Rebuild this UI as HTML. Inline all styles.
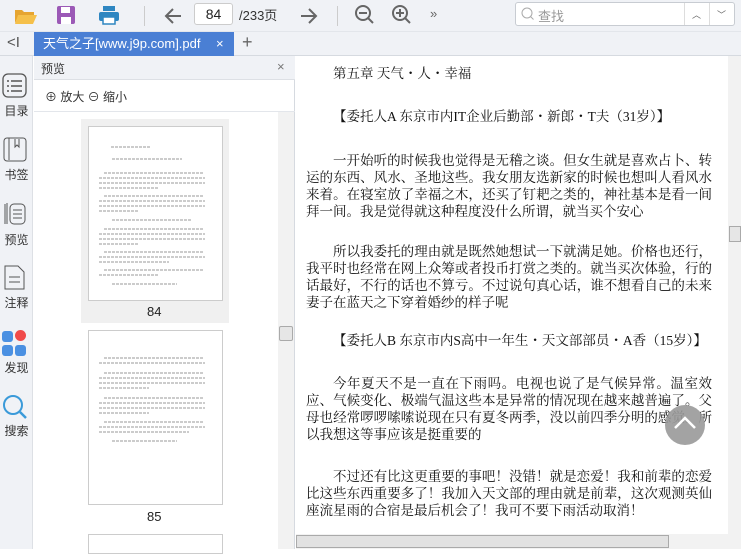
<!DOCTYPE html>
<html><head><meta charset="utf-8"><style>
*{margin:0;padding:0;box-sizing:border-box}
body{width:741px;height:549px;overflow:hidden;background:#fff;font-family:"Liberation Sans","Noto Sans CJK SC",sans-serif;position:relative}
.a{position:absolute}
#tb{left:0;top:0;width:741px;height:32px;background:#f0f2f6;border-bottom:1px solid #e3e6eb}
#tabs{left:0;top:32px;width:741px;height:24px;background:#f0f2f6;border-bottom:1px solid #d6dae0}
#tab{left:34px;top:32px;width:200px;height:24px;background:#4a7fd4;color:#fff;font-size:13px;line-height:24px;padding-left:9px}
#side{left:0;top:56px;width:33px;height:493px;background:#f0f2f6;border-right:1px solid #dde0e5}
.sl{position:absolute;left:0;width:33px;text-align:center;font-size:12px;color:#333}
#pv{left:34px;top:56px;width:261px;height:493px;background:#fff;border-right:1px solid #d6dae0}
#main{left:296px;top:56px;width:432px;height:493px;background:#fff}
.t{position:absolute;left:306px;width:406px;font-family:"Liberation Serif","Noto Serif CJK SC",serif;font-size:13.5px;line-height:17px;color:#111;text-align:justify;text-align-last:justify;white-space:nowrap}
.t div{text-align-last:justify;width:406px}
.thumb{position:absolute;background:#fff;border:1px solid #ccc}
.bl{position:absolute;height:2px;background:repeating-linear-gradient(90deg,#aaa 0 3px,#fff 3px 4px);opacity:.6}
</style></head><body>
<div id="tb" class="a">
<svg class="a" style="left:14px;top:6px" width="24" height="20"><path d="M1 4h7l2 2h10v3H5L1 17z" fill="#e6a531"/><path d="M4 9h19l-4 9H1z" fill="#f5c04a"/></svg>
<svg class="a" style="left:56px;top:5px" width="20" height="20"><rect x="1" y="1" width="18" height="18" rx="2" fill="#9b59b6"/><rect x="5" y="2" width="9" height="6" fill="#fff"/><rect x="5" y="12" width="10" height="7" fill="#fff"/></svg>
<svg class="a" style="left:98px;top:5px" width="22" height="20"><rect x="5" y="1" width="12" height="5" fill="#2e86c1"/><rect x="1" y="7" width="20" height="9" rx="2" fill="#2e86c1"/><rect x="5" y="12" width="12" height="7" fill="#fff" stroke="#2e86c1" stroke-width="1.5"/></svg>
<div class="a" style="left:144px;top:6px;width:1px;height:20px;background:#ccc"></div>
<svg class="a" style="left:163px;top:6px" width="20" height="20"><path d="M18 10H3M10 3l-7 7 7 7" stroke="#666" stroke-width="2" fill="none"/></svg>
<div class="a" style="left:194px;top:3px;width:39px;height:22px;background:#fff;border:1px solid #ccc;border-radius:3px;font-size:14px;text-align:center;line-height:20px;color:#222">84</div>
<div class="a" style="left:239px;top:5px;font-size:13px;color:#333">/233页</div>
<svg class="a" style="left:299px;top:6px" width="20" height="20"><path d="M2 10h15M10 3l7 7-7 7" stroke="#666" stroke-width="2" fill="none"/></svg>
<div class="a" style="left:337px;top:6px;width:1px;height:20px;background:#ccc"></div>
<svg class="a" style="left:354px;top:4px" width="22" height="22"><circle cx="9" cy="9" r="7" stroke="#666" stroke-width="2" fill="none"/><path d="M5 9h8M14 14l5 5" stroke="#666" stroke-width="2"/></svg>
<svg class="a" style="left:391px;top:4px" width="22" height="22"><circle cx="9" cy="9" r="7" stroke="#666" stroke-width="2" fill="none"/><path d="M5 9h8M9 5v8M14 14l5 5" stroke="#666" stroke-width="2"/></svg>
<div class="a" style="left:430px;top:6px;font-size:13px;color:#666">»</div>
<div class="a" style="left:515px;top:2px;width:220px;height:24px;background:#fff;border:1px solid #c8ccd2;border-radius:3px"></div>
<svg class="a" style="left:521px;top:7px" width="14" height="14"><circle cx="6" cy="6" r="5" stroke="#aaa" fill="none"/><path d="M9.5 9.5l3 3" stroke="#aaa"/></svg>
<div class="a" style="left:538px;top:6px;font-size:13px;color:#999">查找</div>
<div class="a" style="left:684px;top:3px;width:1px;height:22px;background:#ddd"></div>
<div class="a" style="left:709px;top:3px;width:1px;height:22px;background:#ddd"></div>
<div class="a" style="left:692px;top:8px;font-size:9px;color:#666">︿</div>
<div class="a" style="left:717px;top:8px;font-size:9px;color:#666">﹀</div>
</div>
<div id="tabs" class="a"><div class="a" style="left:7px;top:2px;font-size:15px;color:#555">&lt;I</div><div class="a" style="left:242px;top:0px;font-size:18px;color:#666">+</div></div>
<div id="tab" class="a">天气之子[www.j9p.com].pdf<span style="position:absolute;left:182px;color:#fff">×</span></div>
<div id="side" class="a">
<svg class="a" style="left:2px;top:17px" width="25" height="25"><rect x="1" y="1" width="23" height="23" rx="5" stroke="#555" stroke-width="1.3" fill="none"/><path d="M5 8h2M9 8h11M5 13h2M9 13h11M5 18h2M9 18h11" stroke="#555" stroke-width="1.5"/></svg>
<div class="sl" style="top:46px">目录</div>
<svg class="a" style="left:3px;top:81px" width="24" height="25"><rect x="1" y="1" width="22" height="23" rx="3" stroke="#555" fill="none"/><path d="M6 1v22M12 2v8l2-2 2 2V2" stroke="#555" fill="none"/></svg>
<div class="sl" style="top:110px">书签</div>
<svg class="a" style="left:3px;top:145px" width="24" height="26"><path d="M2 3v20M4 2v21" stroke="#555"/><rect x="7" y="3" width="15" height="20" rx="4" stroke="#555" fill="none"/><path d="M10 9h9M10 13h9M10 17h9" stroke="#555"/></svg>
<div class="sl" style="top:175px">预览</div>
<svg class="a" style="left:3px;top:208px" width="24" height="28"><path d="M2 2h13l6 6v17H2z" stroke="#555" fill="none"/><path d="M6 13h11M6 18h11" stroke="#555"/></svg>
<div class="sl" style="top:238px">注释</div>
<div class="a" style="left:2px;top:275px;width:11px;height:11px;background:#4a90e2;border-radius:3px"></div>
<div class="a" style="left:15px;top:274px;width:11px;height:11px;background:#f04a4a;border-radius:50%"></div>
<div class="a" style="left:2px;top:289px;width:11px;height:11px;background:#4a90e2;border-radius:3px"></div>
<div class="a" style="left:15px;top:289px;width:11px;height:11px;background:#4a90e2;border-radius:3px"></div>
<div class="sl" style="top:303px">发现</div>
<svg class="a" style="left:2px;top:338px" width="26" height="26"><circle cx="11" cy="11" r="9" stroke="#3a9ad9" stroke-width="2" fill="none"/><path d="M18 18l6 6" stroke="#3a9ad9" stroke-width="2.5"/></svg>
<div class="sl" style="top:366px">搜索</div>
</div>
<div id="pv" class="a">
<div class="a" style="left:0;top:0;width:261px;height:24px;background:#f0f2f6;border-bottom:1px solid #dde0e5"></div>
<div class="a" style="left:7px;top:4px;font-size:12px;color:#333">预览</div>
<div class="a" style="left:243px;top:3px;font-size:13px;color:#777">×</div>
<div class="a" style="left:11px;top:32px;font-size:12px;color:#333">⊕ 放大 ⊖ 缩小</div>
<div class="a" style="left:0;top:55px;width:261px;height:1px;background:#e3e6eb"></div>
<div class="a" style="left:244px;top:56px;width:16px;height:437px;background:#f2f2f2"></div>
<div class="a" style="left:245px;top:270px;width:14px;height:15px;background:#e6e6e6;border:1px solid #aaa;border-radius:2px"></div>
<div class="a" style="left:47px;top:63px;width:148px;height:204px;background:#f0f0f0"></div>
<div class="thumb" style="left:54px;top:70px;width:135px;height:175px"></div>
<div class="a" style="left:113px;top:248px;font-size:13px;color:#222">84</div>
<div class="thumb" style="left:54px;top:274px;width:135px;height:175px"></div>
<div class="a" style="left:113px;top:453px;font-size:13px;color:#222">85</div>
<div class="thumb" style="left:54px;top:478px;width:135px;height:20px"></div>
</div>
<div class="a" style="left:0;top:0">
<div class="bl" style="left:111px;top:146px;width:40px"></div>
<div class="bl" style="left:112px;top:158px;width:70px"></div>
<div class="bl" style="left:104px;top:172px;width:100px"></div><div class="bl" style="left:99px;top:177px;width:106px"></div><div class="bl" style="left:99px;top:182px;width:106px"></div><div class="bl" style="left:99px;top:187px;width:60px"></div>
<div class="bl" style="left:104px;top:195px;width:100px"></div><div class="bl" style="left:99px;top:200px;width:106px"></div><div class="bl" style="left:99px;top:205px;width:106px"></div><div class="bl" style="left:99px;top:210px;width:40px"></div>
<div class="bl" style="left:112px;top:219px;width:80px"></div>
<div class="bl" style="left:104px;top:228px;width:100px"></div><div class="bl" style="left:99px;top:233px;width:106px"></div><div class="bl" style="left:99px;top:238px;width:106px"></div><div class="bl" style="left:99px;top:243px;width:40px"></div>
<div class="bl" style="left:104px;top:251px;width:100px"></div><div class="bl" style="left:99px;top:256px;width:106px"></div><div class="bl" style="left:99px;top:261px;width:70px"></div>
<div class="bl" style="left:104px;top:269px;width:100px"></div><div class="bl" style="left:99px;top:274px;width:60px"></div>
<div class="bl" style="left:112px;top:283px;width:65px"></div>
<div class="bl" style="left:104px;top:357px;width:100px"></div><div class="bl" style="left:99px;top:362px;width:106px"></div>
<div class="bl" style="left:104px;top:372px;width:100px"></div><div class="bl" style="left:99px;top:377px;width:106px"></div><div class="bl" style="left:99px;top:382px;width:106px"></div><div class="bl" style="left:99px;top:387px;width:50px"></div>
<div class="bl" style="left:104px;top:397px;width:100px"></div><div class="bl" style="left:99px;top:402px;width:106px"></div><div class="bl" style="left:99px;top:407px;width:106px"></div><div class="bl" style="left:99px;top:412px;width:50px"></div>
<div class="bl" style="left:104px;top:421px;width:100px"></div><div class="bl" style="left:99px;top:426px;width:106px"></div><div class="bl" style="left:99px;top:431px;width:90px"></div>
<div class="bl" style="left:112px;top:440px;width:65px"></div>
</div>
<div id="main" class="a"></div>
<div class="a" style="left:728px;top:56px;width:13px;height:493px;background:#f2f2f2"></div>
<div class="a" style="left:729px;top:226px;width:12px;height:16px;background:#e6e6e6;border:1px solid #aaa"></div>
<div class="a" style="left:296px;top:534px;width:432px;height:15px;background:#f2f2f2"></div>
<div class="a" style="left:296px;top:535px;width:373px;height:13px;background:#e2e2e2;border:1px solid #aaa"></div>
<div class="t" style="left:333px;top:65px;text-align-last:auto">第五章 天气・人・幸福</div>
<div class="t" style="left:333px;top:108px;width:375px;text-align-last:auto">【委托人A 东京市内IT企业后勤部・新郎・T夫（31岁）】</div>
<div class="t" style="top:152px"><div style="padding-left:27px">一开始听的时候我也觉得是无稽之谈。但女生就是喜欢占卜、转</div><div>运的东西、风水、圣地这些。我女朋友选新家的时候也想叫人看风水</div><div>来着。在寝室放了幸福之木，还买了钉耙之类的，神社基本是看一间</div><div style="text-align-last:auto">拜一间。我是觉得就这种程度没什么所谓，就当买个安心</div></div>
<div class="t" style="top:243px"><div style="padding-left:27px">所以我委托的理由就是既然她想试一下就满足她。价格也还行，</div><div>我平时也经常在网上众筹或者投币打赏之类的。就当买次体验，行的</div><div>话最好，不行的话也不算亏。不过说句真心话，谁不想看自己的未来</div><div style="text-align-last:auto">妻子在蓝天之下穿着婚纱的样子呢</div></div>
<div class="t" style="left:333px;top:332px;width:375px;text-align-last:auto">【委托人B 东京市内S高中一年生・天文部部员・A香（15岁）】</div>
<div class="t" style="top:375px"><div style="padding-left:27px">今年夏天不是一直在下雨吗。电视也说了是气候异常。温室效</div><div>应、气候变化、极端气温这些本是异常的情况现在越来越普遍了。父</div><div>母也经常啰啰嗦嗦说现在只有夏冬两季，没以前四季分明的感觉。所</div><div style="text-align-last:auto">以我想这等事应该是挺重要的</div></div>
<div class="t" style="top:468px"><div style="padding-left:27px">不过还有比这更重要的事吧！没错！就是恋爱！我和前辈的恋爱</div><div>比这些东西重要多了！我加入天文部的理由就是前辈，这次观测英仙</div><div style="text-align-last:auto">座流星雨的合宿是最后机会了！我可不要下雨活动取消！</div></div>
<div class="a" style="left:665px;top:405px;width:40px;height:40px;border-radius:50%;background:#999;opacity:.9"></div>
<svg class="a" style="left:673px;top:415px" width="24" height="16"><path d="M2 13L12 3l10 10" stroke="#fff" stroke-width="2.5" fill="none"/></svg>
</body></html>
